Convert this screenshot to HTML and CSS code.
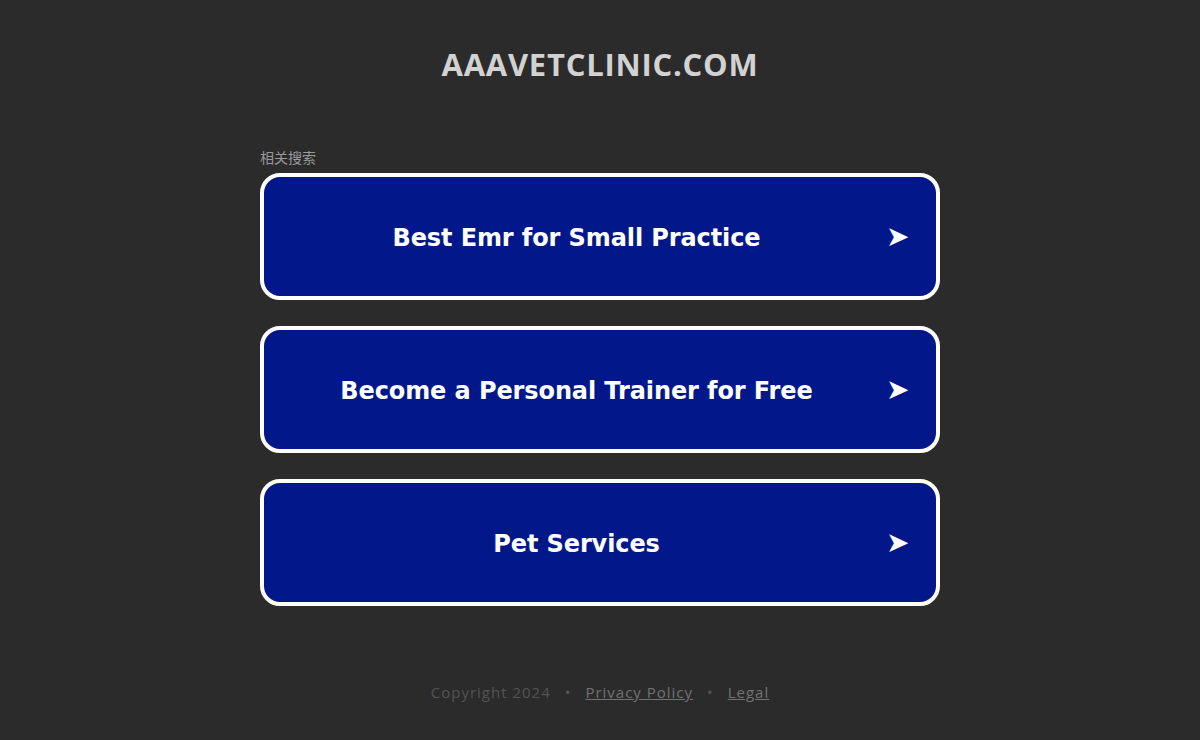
FILE: index.html
```html
<!DOCTYPE html>
<html lang="en">
<head>
<meta charset="utf-8">
<title>aaavetclinic.com</title>
<link rel="stylesheet" href="styles.css">
</head>
<body>
<div class="page">
  <header class="header">
    <h1 class="domain">AAAVETCLINIC.COM</h1>
  </header>
  <main class="main">
    <div class="label">相关搜索</div>
    <ul class="links">
      <li><a class="link" href="#"><span class="link-text">Best Emr for Small Practice</span><span class="arrow">➤</span></a></li>
      <li><a class="link" href="#"><span class="link-text">Become a Personal Trainer for Free</span><span class="arrow">➤</span></a></li>
      <li><a class="link" href="#"><span class="link-text">Pet Services</span><span class="arrow">➤</span></a></li>
    </ul>
  </main>
  <footer class="footer">
    <span class="copy">Copyright 2024</span>
    <span class="dot">•</span>
    <a class="flink" href="#">Privacy Policy</a>
    <span class="dot">•</span>
    <a class="flink" href="#">Legal</a>
  </footer>
</div>
</body>
</html>
```

FILE: styles.css
```css
html, body {
  margin: 0;
  padding: 0;
  background: #2b2b2b;
}
body {
  font-family: "Open Sans", "Liberation Sans", sans-serif;
}
.page {
  width: 1200px;
  height: 740px;
  display: flex;
  flex-direction: column;
  align-items: center;
}
.header {
  padding-top: 42px;
  height: 45px;
}
.domain {
  margin: 0;
  font-family: "Open Sans", sans-serif;
  font-weight: 700;
  font-size: 31px;
  line-height: 45px;
  color: #d2d2d2;
  letter-spacing: 0.75px;
}
.main {
  width: 680px;
  margin-top: 63px;
}
.label {
  font-family: "Noto Sans CJK SC", sans-serif;
  font-size: 14px;
  line-height: 18px;
  color: #9a9a9a;
  height: 18px;
  margin-bottom: 7px;
  margin-top: -2px;
}
.links {
  list-style: none;
  margin: 0;
  padding: 0;
  display: flex;
  flex-direction: column;
  gap: 26px;
}
.link {
  display: flex;
  align-items: center;
  height: 119px;
  border: 4px solid #ffffff;
  border-radius: 20px;
  background: #02188a;
  color: #ffffff;
  text-decoration: none;
  padding-right: 30px;
}
.link-text {
  flex: 1;
  text-align: center;
  font-family: "DejaVu Sans", Verdana, sans-serif;
  font-weight: 700;
  font-size: 24px;
  letter-spacing: -0.1px;
  padding-top: 2px;
  padding-left: 3px;
}
.arrow {
  width: 20px;
  font-family: "DejaVu Sans", sans-serif;
  font-size: 28px;
  line-height: 1;
  color: #ffffff;
  text-align: center;
}
.footer {
  margin-top: auto;
  margin-bottom: 38px;
  display: flex;
  align-items: center;
  gap: 14px;
  font-family: "Open Sans", sans-serif;
  font-size: 15px;
  letter-spacing: 1px;
  color: #535353;
}
.dot {
  font-size: 15px;
  color: #575757;
}
.flink {
  color: #727272;
  text-decoration: underline;
}
```
